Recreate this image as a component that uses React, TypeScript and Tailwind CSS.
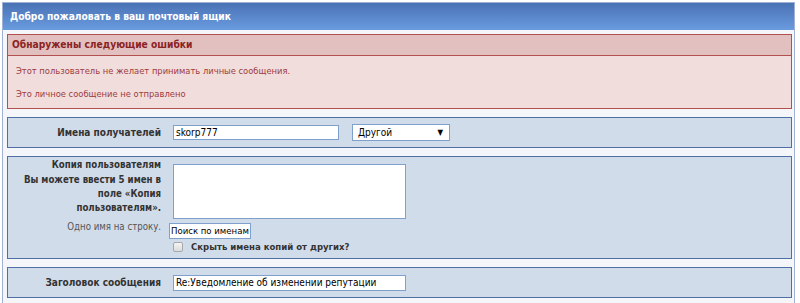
export default function App() {
  return (
    <div className="h-[303px] w-[800px] overflow-hidden bg-white pl-[2px] pr-[5px] pt-[2px]" style={{ fontFamily: '"DejaVu Sans Condensed", "DejaVu Sans", Verdana, sans-serif' }}>
      <div className="h-[320px] border border-[#9fb2d6] bg-[#f4f6fa]">
        <div className="flex h-[27px] items-center bg-gradient-to-b from-[#4a72b4] to-[#6a9ce0] pl-[7px] text-[10.2px] font-bold text-white">
          Добро пожаловать в ваш почтовый ящик
        </div>

        <div className="flex flex-col gap-[8px] pl-[4px] pr-[2px] pt-[4px]">
          <div className="border border-[#b24f4f] bg-[#f2dddd]">
            <div className="flex h-[21px] items-center border-b border-[#b24f4f] bg-[#e2c0c0] pl-[4px] text-[10.2px] font-bold text-[#8c2323]">
              Обнаружены следующие ошибки
            </div>
            <div className="flex flex-col gap-[11px] pb-[8px] pl-[8px] pt-[9px] text-[9.3px] leading-[12px] text-[#9c3c3c]">
              <p>Этот пользователь не желает принимать личные сообщения.</p>
              <p>Это личное сообщение не отправлено</p>
            </div>
          </div>

          <Panel>
            <div className="flex h-[29px] items-center">
              <Label>Имена получателей</Label>
              <div className="ml-[12px] flex h-[15px] w-[166px] items-center border border-[#7f9fcc] bg-white pl-[2px] text-[10px] text-black">skorp777</div>
              <div className="ml-[13px] flex h-[17px] w-[98px] items-center justify-between border border-[#7f9fcc] bg-white pl-[5px] pr-[6px] text-[10px] text-black">
                Другой
                <span className="text-[8px]">▼</span>
              </div>
            </div>
          </Panel>

          <Panel>
            <div className="flex h-[101px] pt-[1px]">
              <div className="flex w-[153px] shrink-0 flex-col items-end text-right text-[9.6px] leading-[14px]">
                <span className="font-bold text-[#333]">Копия пользователям</span>
                <span className="mt-[1px] font-bold text-[#333]">Вы можете ввести 5 имен в</span>
                <span className="font-bold text-[#333]">поле «Копия</span>
                <span className="font-bold text-[#333]">пользователям».</span>
                <span className="mt-[5px] text-[#555]">Одно имя на строку.</span>
              </div>
              <div className="ml-[12px] flex flex-col items-start pt-[6px]">
                <div className="h-[55px] w-[233px] border border-[#7f9fcc] bg-white" />
                <div className="-ml-[4px] mt-[4px] flex h-[16px] items-center border border-[#7f9fcc] bg-white px-[1px] text-[9.5px] text-black">Поиск по именам</div>
                <div className="mt-[1px] flex items-center gap-[8px]">
                  <span className="h-[10px] w-[10px] rounded-[2px] border border-[#a8a8a8] bg-gradient-to-b from-[#f4f4f4] to-[#dcdcdc]" />
                  <span className="text-[9.5px] font-bold text-[#333]">Скрыть имена копий от других?</span>
                </div>
              </div>
            </div>
          </Panel>

          <Panel>
            <div className="flex h-[29px] items-center">
              <Label>Заголовок сообщения</Label>
              <div className="ml-[12px] flex h-[16px] w-[233px] items-center border border-[#7f9fcc] bg-white pl-[2px] text-[10px] text-black">Re:Уведомление об изменении репутации</div>
            </div>
          </Panel>
        </div>
      </div>
    </div>
  )
}

function Panel({ children }: { children: React.ReactNode }) {
  return <div className="border border-[#4f6ea4] bg-[#d1dcea]">{children}</div>
}

function Label({ children }: { children: React.ReactNode }) {
  return <div className="w-[153px] shrink-0 text-right text-[10px] font-bold text-[#333]">{children}</div>
}
